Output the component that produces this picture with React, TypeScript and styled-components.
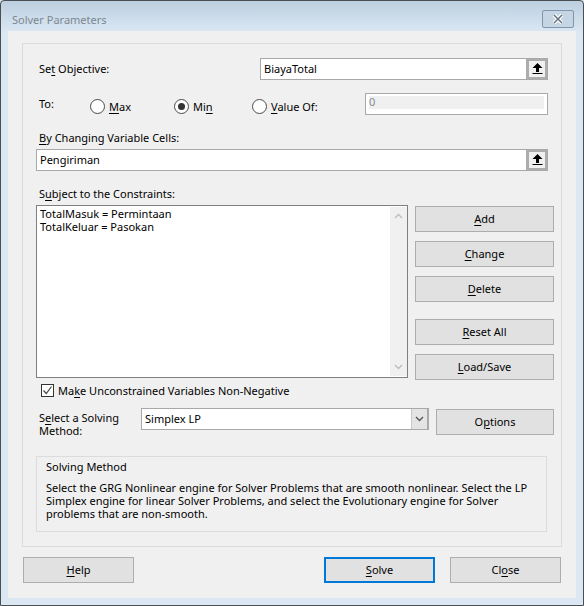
import React from 'react'
import styled, { createGlobalStyle } from 'styled-components'

const GlobalStyle = createGlobalStyle`
  html, body {
    margin: 0;
    padding: 0;
    background: #dbe7f3;
  }
  body {
    font-family: 'Noto Sans', 'Open Sans', sans-serif;
    font-size: 11px;
    color: #000;
  }
`

const Window = styled.div`
  width: 584px;
  height: 606px;
  box-sizing: border-box;
  border: 1px solid #4c4f52;
  border-radius: 4px 4px 0 0;
  background: linear-gradient(#bccfdf 0, #dbe7f3 31px);
  display: flex;
  flex-direction: column;
  overflow: hidden;
`

const TitleBar = styled.div`
  height: 30px;
  flex: none;
  display: flex;
  align-items: flex-start;
  justify-content: space-between;
  padding: 0 9px 0 11px;
`

const Title = styled.span`
  color: #7c8792;
  margin-top: 12px;
  line-height: 14px;
`

const CloseBox = styled.div`
  width: 30px;
  height: 16px;
  margin-top: 9px;
  border: 1px solid #8097ab;
  border-radius: 2px;
  display: flex;
  align-items: center;
  justify-content: center;
  background: #c5d5e4;
`

const Client = styled.div`
  flex: 1;
  margin: 0 7px 7px;
  background: #f0f0f0;
  padding: 12px 14px 0;
  display: flex;
  flex-direction: column;
`

const Panel = styled.div`
  width: 540px;
  height: 504px;
  box-sizing: border-box;
  border: 1px solid #dcdcdc;
  padding: 14px 13px 0;
  display: flex;
  flex-direction: column;
`

const Row = styled.div<{ $top?: number; $h?: number }>`
  display: flex;
  align-items: center;
  margin-top: ${({ $top }) => $top ?? 0}px;
  height: ${({ $h }) => ($h ? `${$h}px` : 'auto')};
`

const Label = styled.label<{ $w?: number; $top?: number; $bottom?: number }>`
  display: block;
  padding-left: 3px;
  line-height: 13px;
  width: ${({ $w }) => ($w ? `${$w}px` : 'auto')};
  margin-top: ${({ $top }) => $top ?? 0}px;
  margin-bottom: ${({ $bottom }) => $bottom ?? 0}px;
  flex: none;
  box-sizing: border-box;
`

const Key = styled.span`
  text-decoration: underline;
  text-underline-offset: 2px;
`

const RefField = styled.div<{ $w: number }>`
  width: ${({ $w }) => $w}px;
  height: 22px;
  flex: none;
  box-sizing: border-box;
  border: 1px solid #a9a9a9;
  background: #fff;
  display: flex;
  align-items: stretch;
`

const FieldText = styled.span`
  flex: 1;
  padding-left: 3px;
  line-height: 20px;
`

const RefButton = styled.div`
  width: 21px;
  flex: none;
  box-sizing: border-box;
  border: 2px solid #adadad;
  border-left-width: 3px;
  background: #f0f0f0;
  display: flex;
  align-items: center;
  justify-content: center;
`

const RadioGroup = styled.div<{ $w: number }>`
  display: flex;
  align-items: center;
  gap: 4px;
  margin-top: 4px;
  width: ${({ $w }) => $w}px;
  flex: none;
`

const RadioMark = styled.span<{ $on?: boolean }>`
  width: 13px;
  height: 13px;
  border-radius: 50%;
  border: 1px solid #4a4a4a;
  background: #fff;
  flex: none;
  display: flex;
  align-items: center;
  justify-content: center;
  &::after {
    content: '';
    width: 7px;
    height: 7px;
    border-radius: 50%;
    background: ${({ $on }) => ($on ? '#333' : 'transparent')};
  }
`

const ValueField = styled.div`
  width: 183px;
  height: 22px;
  box-sizing: border-box;
  border: 1px solid #a9a9a9;
  background: #fff;
  padding: 2px 3px;
  margin-left: auto;
`

const ValueInner = styled.div`
  height: 13px;
  background: #f0f0f0;
  color: #7f8a96;
  line-height: 12px;
`

const Middle = styled.div`
  display: flex;
  margin-top: 5px;
  align-items: flex-start;
  gap: 7px;
`

const ConstraintList = styled.div`
  width: 372px;
  height: 173px;
  flex: none;
  box-sizing: border-box;
  border: 1px solid #808080;
  background: #fff;
  display: flex;
  justify-content: space-between;
`

const ListText = styled.div`
  padding: 1px 3px;
  line-height: 13px;
`

const ScrollTrack = styled.div`
  width: 17px;
  background: #f0f0f0;
  margin: 1px 0;
  display: flex;
  flex-direction: column;
  justify-content: space-between;
  align-items: center;
  padding: 6px 0;
`

const ButtonColumn = styled.div`
  display: flex;
  flex-direction: column;
  flex: none;
  margin-top: 1px;
`

const Button = styled.button<{ $w?: number; $top?: number; $left?: number; $primary?: boolean }>`
  width: ${({ $w }) => $w ?? 139}px;
  height: 26px;
  margin-top: ${({ $top }) => $top ?? 0}px;
  margin-left: ${({ $left }) => $left ?? 0}px;
  padding: 0 0 2px;
  box-sizing: border-box;
  background: #e1e1e1;
  border: ${({ $primary }) => ($primary ? '2px solid #0078d7' : '1px solid #adadad')};
  font: inherit;
  color: #000;
  flex: none;
`

const CheckRow = styled.div`
  display: flex;
  align-items: center;
  gap: 4px;
  margin-top: 3px;
  padding-left: 5px;
  height: 14px;
`

const CheckBox = styled.span`
  width: 13px;
  height: 13px;
  box-sizing: border-box;
  border: 1px solid #333;
  background: #fff;
  display: flex;
  align-items: center;
  justify-content: center;
`

const MethodRow = styled.div`
  display: flex;
  align-items: flex-start;
  margin-top: 14px;
`

const SelectBox = styled.div`
  width: 288px;
  height: 22px;
  margin-top: -3px;
  flex: none;
  box-sizing: border-box;
  border: 1px solid #a9a9a9;
  background: #fff;
  display: flex;
`

const SelectArrow = styled.div`
  width: 17px;
  margin-left: auto;
  box-sizing: border-box;
  background: #e4e4e4;
  border-left: 1px solid #c8c8c8;
  border-right: 1px solid #a9a9a9;
  display: flex;
  align-items: center;
  justify-content: center;
`

const MethodBox = styled.div`
  width: 511px;
  height: 76px;
  box-sizing: border-box;
  margin-top: 19px;
  border: 1px solid #dcdcdc;
  padding: 3px 9px 0;
  line-height: 13px;
`

const MethodHead = styled.div`
  line-height: 14px;
  margin-bottom: 7px;
`

const Footer = styled.div`
  width: 538px;
  margin-top: 10px;
  margin-left: 1px;
  display: flex;
`

const UpArrow = () => (
  <svg width="11" height="12" viewBox="0 0 11 12">
    <path d="M5.5 0 L10.5 5 L7 5 L7 9 L4 9 L4 5 L0.5 5 Z M0.5 10 H10.5 V11 H0.5 Z" fill="#000" />
  </svg>
)

const Chevron = ({ up, color = '#bdbdbd' }: { up?: boolean; color?: string }) => (
  <svg width="9" height="6" viewBox="0 0 9 6">
    <path d={up ? 'M1 5 L4.5 1.5 L8 5' : 'M1 1 L4.5 4.5 L8 1'} fill="none" stroke={color} strokeWidth="1.4" />
  </svg>
)

const App: React.FC = () => {
  return (
    <>
      <GlobalStyle />
      <Window>
        <TitleBar>
          <Title>Solver Parameters</Title>
          <CloseBox>
            <svg width="14" height="10" viewBox="0 0 14 10">
              <path d="M3 1 L11 9 M11 1 L3 9" stroke="#fff" strokeWidth="3.8" />
              <path d="M3 1 L11 9 M11 1 L3 9" stroke="#66727e" strokeWidth="1.5" />
            </svg>
          </CloseBox>
        </TitleBar>
        <Client>
          <Panel>
            <Row $h={22}>
              <Label $w={224} $bottom={2}>
                Se<Key>t</Key> Objective:
              </Label>
              <RefField $w={288}>
                <FieldText>BiayaTotal</FieldText>
                <RefButton>
                  <UpArrow />
                </RefButton>
              </RefField>
            </Row>
            <Row $top={13} $h={22}>
              <Label $w={54} $bottom={2}>
                To:
              </Label>
              <RadioGroup $w={84}>
                <RadioMark />
                <span>
                  <Key>M</Key>ax
                </span>
              </RadioGroup>
              <RadioGroup $w={78}>
                <RadioMark $on />
                <span>
                  Mi<Key>n</Key>
                </span>
              </RadioGroup>
              <RadioGroup $w={90}>
                <RadioMark />
                <span>
                  <Key>V</Key>alue Of:
                </span>
              </RadioGroup>
              <ValueField>
                <ValueInner>0</ValueInner>
              </ValueField>
            </Row>
            <Label $top={16}>
              <Key>B</Key>y Changing Variable Cells:
            </Label>
            <Row $top={5} $h={22}>
              <RefField $w={512}>
                <FieldText>Pengiriman</FieldText>
                <RefButton>
                  <UpArrow />
                </RefButton>
              </RefField>
            </Row>
            <Label $top={16}>
              S<Key>u</Key>bject to the Constraints:
            </Label>
            <Middle>
              <ConstraintList>
                <ListText>
                  TotalMasuk = Permintaan
                  <br />
                  TotalKeluar = Pasokan
                </ListText>
                <ScrollTrack>
                  <Chevron up />
                  <Chevron />
                </ScrollTrack>
              </ConstraintList>
              <ButtonColumn>
                <Button>
                  <Key>A</Key>dd
                </Button>
                <Button $top={9}>
                  <Key>C</Key>hange
                </Button>
                <Button $top={9}>
                  <Key>D</Key>elete
                </Button>
                <Button $top={17}>
                  <Key>R</Key>eset All
                </Button>
                <Button $top={9}>
                  <Key>L</Key>oad/Save
                </Button>
              </ButtonColumn>
            </Middle>
            <CheckRow>
              <CheckBox>
                <svg width="11" height="11" viewBox="0 0 11 11">
                  <path d="M1.5 5.5 L4.3 8.5 L9.5 1.5" fill="none" stroke="#444" strokeWidth="1.2" />
                </svg>
              </CheckBox>
              <span>
                Ma<Key>k</Key>e Unconstrained Variables Non-Negative
              </span>
            </CheckRow>
            <MethodRow>
              <Label $w={105}>
                S<Key>e</Key>lect a Solving
                <br />
                Method:
              </Label>
              <SelectBox>
                <FieldText>Simplex LP</FieldText>
                <SelectArrow>
                  <Chevron color="#555" />
                </SelectArrow>
              </SelectBox>
              <Button $w={118} $left={7} $top={-2}>
                O<Key>p</Key>tions
              </Button>
            </MethodRow>
            <MethodBox>
              <MethodHead>Solving Method</MethodHead>
              Select the GRG Nonlinear engine for Solver Problems that are smooth nonlinear. Select the LP
              <br />
              Simplex engine for linear Solver Problems, and select the Evolutionary engine for Solver
              <br />
              problems that are non-smooth.
            </MethodBox>
          </Panel>
          <Footer>
            <Button $w={111}>
              <Key>H</Key>elp
            </Button>
            <Button $w={111} $left={190} $primary>
              <Key>S</Key>olve
            </Button>
            <Button $w={111} $left={15}>
              Cl<Key>o</Key>se
            </Button>
          </Footer>
        </Client>
      </Window>
    </>
  )
}

export default App
